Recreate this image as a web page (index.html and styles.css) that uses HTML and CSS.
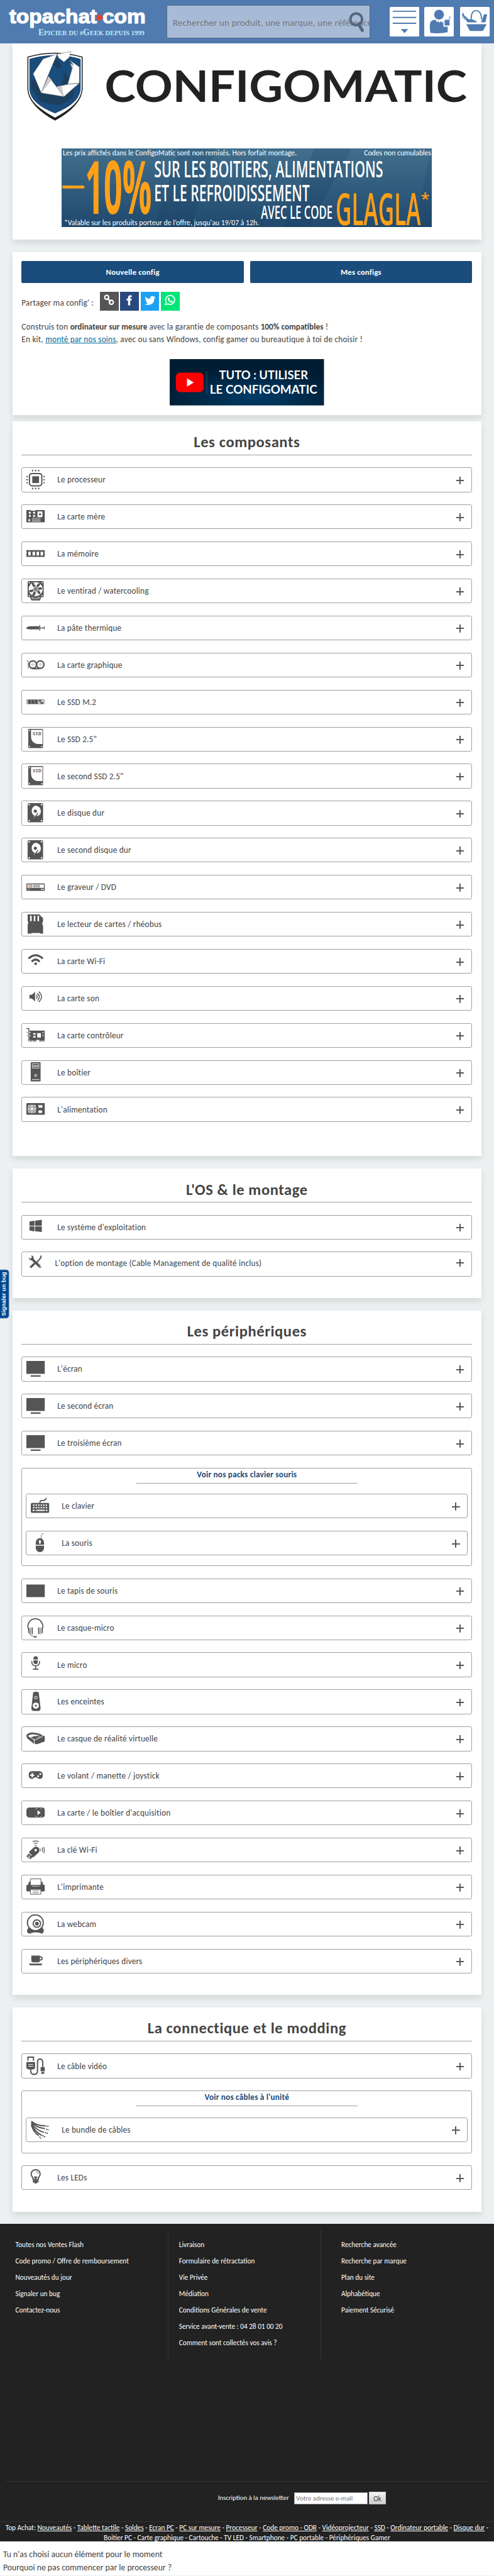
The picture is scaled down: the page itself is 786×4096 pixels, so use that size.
FILE: index.html
```html
<!DOCTYPE html>
<html lang="fr">
<head>
<meta charset="utf-8">
<title>ConfigoMatic - TopAchat</title>
<link rel="stylesheet" href="styles.css">
</head>
<body>
<svg class="sprite" width="0" height="0">
  <symbol id="cpu" viewBox="0 0 30 32"><rect x="5" y="6" width="20" height="20" rx="4" fill="none" stroke="#555" stroke-width="2"/><rect x="9.5" y="10.500" width="11" height="11"/><path d="M10 0v2.500M15 0v2.500M20 0v2.500M10 29v2.500M15 29v2.500M20 29v2.500M0 11h2.500M0 16h2.500M0 21h2.500M27.500 11h2.500M27.500 16h2.500M27.500 21h2.500" stroke="#555" stroke-width="2"/></symbol>
  <symbol id="mobo" viewBox="0 0 30 32"><path d="M0 5h7v1h8v-1h15v20H0z"/><path d="M4 8h3v3h-3zM11 8h3v3h-3zM4 13h3v3h-3zM11 13h3v3h-3zM18 7.500h8v9h-8zM3 20h3v3h-3z" fill="#fff"/><path d="M20.500 10.500h3v3h-3z"/><path d="M9 18.500h14M9 21h14M9 23h14" stroke="#bbb" stroke-width="1.300"/></symbol>
  <symbol id="ram" viewBox="0 0 30 32"><path d="M0 10h30v3l-1 1 1 1v6H10l-1-1-1 1H0v-6l1-1-1-1z"/><path d="M3 12.500h4v6h-4zM10 12.500h4v6h-4zM16.500 12.500h4v6h-4zM23 12.500h4v6h-4z" fill="#fff"/></symbol>
  <symbol id="fan" viewBox="0 0 30 32"><path d="M2 2q0-2 2-2h22q2 0 2 2v23q0 1-2 1H4q-2 0-2-1z"/><circle cx="15" cy="13" r="11.300" fill="#fff"/><g fill="none" stroke="#555" stroke-width="3.600"><path d="M15 9q-5-1-4-6M18 11q-1-5 4-6M19 14q3-4 6-1M16 16q5 0 5 5M13 17q1 4-3 6M11 14q-3 4-6 1"/></g><circle cx="15" cy="13" r="4" fill="#555" stroke="#fff"/><circle cx="15" cy="13" r="1.800" fill="none" stroke="#fff" stroke-width=".7"/><path d="M7 26l2 4h12l2-4" fill="none" stroke="#555" stroke-width="2.400"/><path d="M10 27h10" stroke="#555" stroke-width="2"/><g fill="#fff"><circle cx="4.500" cy="2.500" r="1"/><circle cx="25.500" cy="2.500" r="1"/><circle cx="4.500" cy="23.500" r="1"/><circle cx="25.500" cy="23.500" r="1"/></g></symbol>
  <symbol id="paste" viewBox="0 0 30 32"><path d="M0 15l5-2h16v5H5l-5-1z"/><path d="M21 15h8v1.500h-8zM21 11h1.200v9.500H21zM28.600 13h1.200v5h-1.200z"/></symbol>
  <symbol id="gpu" viewBox="0 0 30 32"><path d="M1 8l2 2v12M6 21h20" fill="none" stroke="#777" stroke-width="1.200"/><g fill="#fff" stroke="#555" stroke-width="2.200"><circle cx="10.500" cy="15" r="6"/><circle cx="22.500" cy="15" r="6"/></g><path d="M10.500 11v8M6.500 15h8M22.500 11v8M18.500 15h8" stroke="#bbb"/><path d="M9 22h12" stroke="#555" stroke-width="1.500"/></symbol>
  <symbol id="m2" viewBox="0 0 30 32"><path d="M.5 11.500h29v7H.5z" fill="#ccc" stroke="#888" stroke-width=".8"/><path d="M2.500 12h5v6.500h-5zM8 12h5v6.500H8zM13.500 12h5v6.500h-5zM20 12h4v3h-4zM23 15.500h4v3h-4z"/></symbol>
  <symbol id="ssd" viewBox="0 0 30 32"><path d="M3 1q0-1 1-1h22q1 0 1 1v29q0 1-1 1H4q-1 0-1-1z"/><path d="M7.500 1.500H26v23h-8Q8 23 7.500 13z" fill="#fff"/><text x="10.300" y="10" class="tiny" textLength="14">SSD</text><g fill="#fff"><circle cx="5" cy="2.500" r="1"/><circle cx="5" cy="28.500" r="1"/><circle cx="25" cy="28.500" r="1"/></g></symbol>
  <symbol id="hdd" viewBox="0 0 30 32"><path d="M2 2q0-2 2-2h21q2 0 2 2v27q0 2-2 2H4q-2 0-2-2z"/><path d="M14.500 4a9 9 0 0 1 9 9q0 7-7 8.500l3-5-9 10 3-6a9 9 0 0 1 1-16.500" fill="#fff"/><path d="M19 16l-9 11" stroke="#555" stroke-width="1.200"/><circle cx="14.500" cy="13" r="2.600"/><g fill="#fff"><circle cx="4.500" cy="2.500" r="1.200"/><circle cx="24.500" cy="2.500" r="1.200"/><circle cx="4.500" cy="28.500" r="1.200"/><circle cx="24.500" cy="28.500" r="1.200"/></g></symbol>
  <symbol id="dvd" viewBox="0 0 30 32"><rect y="10" width="30" height="12" rx="1"/><path d="M1.500 11.500h27v5.500h-27zM23.500 18.800h5v1.200h-5zM2 18.800h1v1.200H2zM4.500 18.800h1v1.200h-1z" fill="#fff"/><text x="3" y="16" class="tiny dvd" textLength="19" lengthAdjust="spacingAndGlyphs">CD-DVD</text></symbol>
  <symbol id="sd" viewBox="0 0 30 32"><path d="M2 0h19l6 6v6l-1 1v4l1 1v13h-5v-1H8v1H2V18l1-6-1-1z"/><path d="M6 2h2.500v9H6zM12 2h2.500v9H12zM18 2h2.500v9H18z" fill="#fff"/></symbol>
  <symbol id="wifi" viewBox="0 0 30 32"><path d="M4.500 10.500q10.500-9 21 0M9.500 15.500q5.500-5 11 0" fill="none" stroke="#555" stroke-width="3.200" stroke-linecap="round"/><circle cx="15" cy="19.800" r="2.200"/></symbol>
  <symbol id="sound" viewBox="0 0 30 32"><path d="M5 10h4l5-5v16l-5-5H5z"/><path d="M16 10q3 3 0 6.500M18 7.500q6 5.500 0 11.500M20 5q9 8 0 16.500" fill="none" stroke="#555" stroke-width="1.500"/></symbol>
  <symbol id="ctrl" viewBox="0 0 30 32"><path d="M0 4.500h4v21" fill="none" stroke="#555" stroke-width="1.500"/><path d="M5 8h25v15h-1v3h-1.500v-2H26v2h-1v-2h-1v2h-1v-2h-1v2h-1v-3h-5v3h-1v-2h-1v2h-1v-2h-1v2h-1v-2H9v2H8v-2H7v2H6v-3H5z"/><path d="M11 12h4v2.500h-4zM11 16.500h4V19h-4zM17.500 12h6v7h-6zM26 10.500h2V12h-2zM26 15h2v1.500h-2zM5 10h1.500v2H5zM5 15h1.500v2H5z" fill="#fff"/><path d="M1 10h1v2H1zM1 15h1v2H1z"/></symbol>
  <symbol id="case" viewBox="0 0 30 32"><rect x="7" width="16" height="31" rx="1"/><path d="M9.500 2.500h11v3h-11zM9.500 7h11v2.500h-11z" fill="none" stroke="#ddd"/><circle cx="15" cy="21.500" r="1.700" fill="none" stroke="#fff"/><path d="M9 28h12" stroke="#ccc" stroke-width="1.500"/></symbol>
  <symbol id="psu" viewBox="0 0 30 32"><rect y="6" width="30" height="19" rx="1"/><g fill="none" stroke="#fff"><rect x="3" y="9.500" width="12" height="12" rx="3"/><circle cx="9" cy="15.500" r="4.500"/><circle cx="9" cy="15.500" r="2"/><path d="M3 9.500l12 12M15 9.500l-12 12M9 9.500v12M3 15.500h12"/><rect x="20" y="18.500" width="5" height="3" fill="#fff"/></g><path d="M19.500 9.500h6.500v4h-6.500z" fill="#fff"/></symbol>
  <symbol id="win" viewBox="0 0 30 32"><path d="M5 7.500l8-1.300v8H5zM14 6l11-1.500v9.700H14zM5 15.300h8v8l-8-1.300zM14 15.300h11v9.200l-11-1.400z"/></symbol>
  <symbol id="tools" viewBox="0 0 30 32"><path d="M9 9l13 12.500" stroke="#555" stroke-width="4" stroke-linecap="round"/><path d="M8 3l1 4-3 2-2-3q0 4 3 5h4l1-3q0-4-4-5zM23 3l2 1-1 4-7 8-2-1 7-8zM12 15l3 2-6 6q-2 1-4-1z"/><circle cx="22.300" cy="21" r="1" fill="#fff"/></symbol>
  <symbol id="screen" viewBox="0 0 30 32"><path d="M0 3h30v21H0zM7 26.300h16v2.200H7z"/></symbol>
  <symbol id="kbd" viewBox="0 0 30 32"><path d="M15 11q-1-4 4-4t6-4" fill="none" stroke="#555" stroke-width="2"/><rect y="11" width="30" height="16" rx="2"/><path d="M3.500 14.500h23M3.500 18.500h23" stroke="#fff" stroke-width="2" stroke-dasharray="2.500 1.600"/><path d="M3 23h3.500M8.500 23h14M24 23h3" stroke="#fff" stroke-width="2"/></symbol>
  <symbol id="mouse" viewBox="0 0 30 32"><path d="M21 .5q-5 0-4 4t-2 4" fill="none" stroke="#777"/><path d="M8 17q0-8.500 6.700-9 6.800.5 6.800 9v1.500H8zM8 20h13.500v4q-1 6.500-6.800 6.500T8 24z"/><rect x="13.200" y="11" width="3" height="6" rx="1.500" fill="#fff"/></symbol>
  <symbol id="pad" viewBox="0 0 30 32"><path d="M0 5.500h30v20.500H0z"/></symbol>
  <symbol id="headset" viewBox="0 0 30 32"><path d="M4 19Q1 14 3.500 8 7.500 1 14.500 1T25.500 8q2.500 6-.5 11" fill="none" stroke="#555" stroke-width="1.800"/><path d="M3 16l2 .5v9l-2-2zM6 15h1v11H6zM8.500 15h1.800v11H8.500zM19 15h1.800v11H19zM22 15h1v11h-1zM24.500 16l2-.5v8l-2 2z"/><path d="M5.500 25q1 4 9 5.500" fill="none" stroke="#555"/><ellipse cx="14.500" cy="30" rx="2.300" ry="1.300"/></symbol>
  <symbol id="mic" viewBox="0 0 30 32"><path d="M11.500 5.500q0-3 3.500-3t3.500 3v2.500h-7zM11.500 9.200h7v3q0 3-3.500 3t-3.500-3z"/><path d="M8.800 10.500V13q.5 5 6.200 5t6.200-5v-2.500M15 18v5.500M10.500 23.500h9" fill="none" stroke="#555" stroke-width="1.700"/></symbol>
  <symbol id="speaker" viewBox="0 0 30 32"><path d="M11 1q4-2 9 0l3 26q0 3-3 4h-9q-3-1-3-4z"/><circle cx="15.300" cy="22.500" r="5" fill="#fff"/><circle cx="15.300" cy="22.500" r="1.700"/><circle cx="15.300" cy="9.500" r="2.200" fill="none" stroke="#fff"/></symbol>
  <symbol id="vr" viewBox="0 0 30 32"><path d="M1 12q2-5 10-4.500 9 .5 14 4" fill="none" stroke="#555" stroke-width="3"/><path d="M0 10l12 8 1 7L1 15zM13 17l14-6q3 0 3 3v5q0 2-3 2.500L17 25q-3 0-4-2z"/><path d="M12 12l12-1-11 6-6-3z"/><path d="M12.500 25v-6l14-6.500" fill="none" stroke="#fff" stroke-width=".8"/></symbol>
  <symbol id="gamepad" viewBox="0 0 30 32"><path d="M9 8.500h12q5.500.5 5.500 6.500t-5 6q-3 0-4.500-2.500h-4Q11.500 21 9 21q-5 0-5.300-6T9 8.500"/><path d="M9.500 11.500v7M6 15h7" stroke="#fff" stroke-width="2.200"/><circle cx="19" cy="16.500" r="1.600" fill="#fff"/><circle cx="22.500" cy="13" r="1.600" fill="#fff"/></symbol>
  <symbol id="capture" viewBox="0 0 30 32"><rect y="7" width="30" height="16.500" rx="5"/><path d="M18 11.500l5 4-5 4z" fill="#fff"/><path d="M14 10q2-1.500 4-1M22 9q2 0 3 1M14 21q2 1 4 1M22 22q2 0 3-1" fill="none" stroke="#bbb"/></symbol>
  <symbol id="usb" viewBox="0 0 30 32"><path d="M4 19L13 11q5-2 8 3 1 4-2 7l-8 7z"/><path d="M4 21.500L0 26l6 5 4.500-4z"/><path d="M3 25l2 1.500M6 23l2 1.500M4 27l2 2" stroke="#fff" stroke-width="1.200"/><circle cx="15" cy="16" r="2" fill="#fff"/><path d="M10 2.500q5-2.500 10 0M12 5.500q3-1.500 6 0M13.500 8.500h3M23 14v3M25.500 12q1.500 3.500 0 7M28 11q2.500 5 0 10" fill="none" stroke="#666" stroke-width="1.400"/></symbol>
  <symbol id="printer" viewBox="0 0 30 32"><path d="M0 14q0-2 2-2h26q2 0 2 2v8q0 1-2 1H2q-2 0-2-1zM3 12l1-5h2v5zM27 12l-1-5h-2v5z"/><path d="M6.500 2.500h17v10.500h-17zM6.500 19.500h17v8h-17z" fill="#fff" stroke="#555"/><path d="M10 22h10M10 25h10" stroke="#777"/><path d="M9 14.500h12" stroke="#ccc"/></symbol>
  <symbol id="webcam" viewBox="0 0 30 32"><path d="M4 21h21q4 3 3 7-1 3-3 3-5-2-10-2t-9 2q-4 0-5-3 0-4 3-7"/><circle cx="14.500" cy="13.500" r="12.800" fill="#fff" stroke="#555" stroke-width="2"/><circle cx="17" cy="15" r="6" fill="#fff" stroke="#555" stroke-width="2"/><circle cx="17" cy="15" r="3"/></symbol>
  <symbol id="cup" viewBox="0 0 30 32"><path d="M8 6.500h14v8q0 3-3 3h-8q-3 0-3-3zM4 19.500h22q-1 3-4 3H8q-3 0-4-3"/><path d="M22 8.500q3.500 0 3.500 2.700T22 14" fill="none" stroke="#555" stroke-width="1.800"/></symbol>
  <symbol id="cable" viewBox="0 0 30 32"><path d="M2.500 8V2h9v6" fill="none" stroke="#555" stroke-width="2"/><path d="M0 10h14v10l-2.500 2H3l-3-2zM23 18h7v7h-7zM24 26h5v3h-5z"/><path d="M7 21v3q0 6 5.500 6t5.500-6V10q0-5 4-5t4.500 5v8" fill="none" stroke="#555" stroke-width="2"/><path d="M3 14h8M3 17h8" stroke="#fff"/></symbol>
  <symbol id="bundle" viewBox="0 0 30 32"><g fill="none" stroke="#555" stroke-width="2"><path d="M1 2q7 7 23 7.500M1 2q6 10 22 12M1 4q6 12 20 16M1 6q5 13 17 19M1 8q4 13 12 17"/><path d="M25 10h4M25 15l4 1M23 20l5 2M19 25l5 3M14 27l3 3" stroke-dasharray="2 1"/></g></symbol>
  <symbol id="bulb" viewBox="0 0 30 32"><path d="M11 19q0-3-2-5-2-3-1-6 2-5 7-5t7 5q1 3-1 6-2 2-2 5z" fill="#fff" stroke="#555" stroke-width="2"/><path d="M15 6q4 0 4 4" fill="none" stroke="#777"/><path d="M12 14l3 6 3-6M10.500 20h9v4h-3v1.500h-3V24h-3z"/></symbol>
</svg>

<header class="top">
  <svg class="brand" viewBox="0 0 240 70">
    <text class="brand-name" x="15" y="37.500" textLength="142" lengthAdjust="spacingAndGlyphs">topachat</text>
    <text class="brand-name" x="166" y="37.500" textLength="70" lengthAdjust="spacingAndGlyphs">com</text>
    <path d="M161.500 22l6 6.500-6 6.500-6-6.500z" fill="#e8432c"/>
    <text class="brand-tag" x="62" y="57" textLength="172" lengthAdjust="spacingAndGlyphs"><tspan class="cap">E</tspan>PICIER DU #<tspan class="cap">G</tspan>EEK DEPUIS 1999</text>
  </svg>
  <div class="search">
    <span class="search-text">Rechercher un produit, une marque, une référence</span>
    <svg class="glass" viewBox="0 0 26 34"><circle cx="12" cy="12" r="9.500" fill="none" stroke="#55677e" stroke-width="4"/><path d="M16 20l6 10" stroke="#55677e" stroke-width="5" stroke-linecap="round"/></svg>
  </div>
  <nav class="tools">
    <svg class="tool" viewBox="0 0 48 48"><rect width="48" height="48" rx="2" fill="#fff"/><path d="M5 7h38M5 17h38M5 26.500h38" stroke="#4f7bb0" stroke-width="2"/><path d="M18 36h12l-6 6.500z" fill="#4f7bb0"/></svg>
    <svg class="tool" viewBox="0 0 48 48"><rect width="48" height="48" rx="2" fill="#fff"/><g fill="#4f7bb0"><circle cx="24" cy="12.500" r="8"/><path d="M10 42q-2-12 0-17 2-4 9-4l1 4 3-2 2 3 2-3 3 3 1-4v10h7v9q-14 3-28 1z"/><path d="M33 21h7l1-5 2-1-2 5v10h-8z"/></g></svg>
    <svg class="tool basket" viewBox="0 0 48 48"><rect width="48" height="48" rx="2" fill="#fff"/><g fill="#4f7bb0"><path d="M10 28h33l-6 11H16zM3 12l3-3v4l8 7q8-1 14 5H12L6 16l-2-1zM39 12h5l-3 13h-7z"/></g><path d="M18 20q0-14 8-14t9 14" fill="none" stroke="#4f7bb0" stroke-width="2"/><path d="M5 15l-1 4M7 16v5" stroke="#4f7bb0"/></svg>
  </nav>
</header>

<main>
  <section class="card hero">
    <svg class="logo" viewBox="0 0 730 120">
      <path d="M10.500 10q44-13 88 0v52q-2 26-44 50Q12 88 10.500 62z" fill="#fff" stroke="#222" stroke-width="1.500"/>
      <path d="M11 68q6 24 43.500 44.500Q92 92 98 68q-6 20-43.500 40Q17 88 11 68z" fill="#222"/>
      <path d="M13 13q41.500-12 83 0v50q-3 23-41.500 38Q15 86 13 63z" fill="#1a4c7c"/>
      <path d="M15 50l3 12 12 20 33 6 20-12 3-18-20-30-16-8-15 18z" fill="#1d3f5e"/>
      <path d="M42 40l8-20 12-4 10 10-6 28-14 10z" fill="#1a4c7c"/>
      <path d="M47 15l12-2 6 11-5 5-9-7z" fill="#1d3f5e"/>
      <g fill="#fff" stroke="#444" stroke-width=".5"><path d="M58 5L35 13 19 37l13 31 14-35zM58 5l22-4-2 9-9 8-9-7zM77 14l17 12v26l-19 2 9-32zM75 54l19-2-25 22-12-16zM44 41l25 33-37-6z"/></g>
      <path d="M44 41l-12 27 17-21zM57 58l12 16-4-18zM84 22l-1 8-4-10z" fill="#ccc"/>
      <text class="wordmark" x="135" y="82.500" textLength="587" lengthAdjust="spacingAndGlyphs">CONFIGOMATIC</text>
    </svg>
    <svg class="promo" viewBox="0 0 600 128">
      <defs><linearGradient id="sea" x1="0" y1="0" x2="0" y2="1"><stop offset="0" stop-color="#426f8d"/><stop offset="1" stop-color="#20496d"/></linearGradient></defs>
      <rect width="600" height="128" fill="url(#sea)"/>
      <path d="M190 0h60l-40 128h-60zM410 0h60l-70 128h-40zM600 0v128h-30z" fill="#123a60" opacity=".18"/>
      <text class="fine" x="2" y="11" textLength="379">Les prix affichés dans le ConfigoMatic sont non remisés. Hors forfait montage.</text>
      <text class="fine" x="490" y="11" textLength="109">Codes non cumulables</text>
      <rect x="1" y="60" width="36" height="5" rx="2" fill="#ffa019"/>
      <text class="hand ten" transform="translate(38 106)" textLength="108" lengthAdjust="spacingAndGlyphs">10%</text>
      <text class="hand" x="150" y="47" textLength="371" lengthAdjust="spacingAndGlyphs">SUR LES BOITIERS, ALIMENTATIONS</text>
      <text class="hand" x="150" y="86" textLength="252" lengthAdjust="spacingAndGlyphs">ET LE REFROIDISSEMENT</text>
      <text class="hand code" x="323" y="114" textLength="116" lengthAdjust="spacingAndGlyphs">AVEC LE CODE</text>
      <text class="hand glagla" x="444" y="124.500" textLength="138" lengthAdjust="spacingAndGlyphs">GLAGLA</text>
      <text class="hand star" x="582" y="91">*</text>
      <text class="fine" x="4" y="124" textLength="316">*Valable sur les produits porteur de l’offre, jusqu'au 19/07 à 12h.</text>
    </svg>
  </section>

  <section class="card intro">
    <div class="buttons"><a class="btn">Nouvelle config</a><a class="btn">Mes configs</a></div>
    <div class="share"><span>Partager ma config' :</span>
      <svg class="sh link" viewBox="0 0 30 30"><g fill="none" stroke="#fff" stroke-width="2.200"><circle cx="11" cy="9" r="3.300"/><circle cx="18.500" cy="17" r="3.300"/><path d="M12 10.500l5.500 5.500"/></g></svg>
      <svg class="sh fb" viewBox="0 0 30 30"><path d="M13 22v-8h-2.500v-3H13V9q0-3.500 3.500-3.500H19v3h-1.500Q16.500 8.500 16.500 10v1H19l-.5 3h-2v8z" fill="#fff"/></svg>
      <svg class="sh tw" viewBox="0 0 30 30"><path d="M7 7.500q3.500 4 8 4 0-4.500 3.500-4.500 2 0 3 1l2-.7-1.500 2 1.800-.3-1.800 1.800Q22 21 12 21.500q-3.500 0-5.500-1.500 3 0 5-1.500-2.500-.5-3-2.500H10q-2.500-1-2.700-3.500l1.300.3Q6.500 10.500 7 7.500" fill="#fff"/></svg>
      <svg class="sh wa" viewBox="0 0 30 30"><path d="M7.500 20.500l1-4a7.300 7.300 0 1 1 3 3z" fill="none" stroke="#fff" stroke-width="1.700"/><path d="M12 9.500l1.500 0 .8 2-.8 1q1 2 3 2.800l1-1 2 1q0 2-2 2.200-6-1-6.500-6 0-1.500 1-2" fill="#fff"/></svg>
    </div>
    <p class="lead">Construis ton <b>ordinateur sur mesure</b> avec la garantie de composants <b>100% compatibles</b> !<br>En kit, <a class="lnk">monté par nos soins</a>, avec ou sans Windows, config gamer ou bureautique à toi de choisir !</p>
    <svg class="tuto" viewBox="0 0 250 75">
      <defs><radialGradient id="deep" cx=".55" cy=".8" r=".6"><stop offset="0" stop-color="#003c68"/><stop offset="1" stop-color="#001d33"/></radialGradient></defs>
      <rect width="250" height="75" fill="url(#deep)"/>
      <rect x="10" y="22" width="45" height="31.500" rx="7" fill="#f00"/><path d="M28 31l11 7-11 6.500z" fill="#fff"/><path d="M60 20v36" stroke="#3b5468"/>
      <text class="tuto-text" x="80" y="33" textLength="144" lengthAdjust="spacingAndGlyphs">TUTO : UTILISER</text>
      <text class="tuto-text" x="65" y="56.500" textLength="174" lengthAdjust="spacingAndGlyphs">LE CONFIGOMATIC</text>
    </svg>
  </section>

  <section class="card parts">
    <h2>Les composants</h2>
    <div class="list">
      <div class="row"><svg><use href="#cpu"/></svg><span>Le processeur</span><i></i></div>
      <div class="row"><svg><use href="#mobo"/></svg><span>La carte mère</span><i></i></div>
      <div class="row"><svg><use href="#ram"/></svg><span>La mémoire</span><i></i></div>
      <div class="row"><svg><use href="#fan"/></svg><span>Le ventirad / watercooling</span><i></i></div>
      <div class="row"><svg><use href="#paste"/></svg><span>La pâte thermique</span><i></i></div>
      <div class="row"><svg><use href="#gpu"/></svg><span>La carte graphique</span><i></i></div>
      <div class="row"><svg><use href="#m2"/></svg><span>Le SSD M.2</span><i></i></div>
      <div class="row"><svg><use href="#ssd"/></svg><span>Le SSD 2.5"</span><i></i></div>
      <div class="row"><svg><use href="#ssd"/></svg><span>Le second SSD 2.5"</span><i></i></div>
      <div class="row"><svg><use href="#hdd"/></svg><span>Le disque dur</span><i></i></div>
      <div class="row"><svg><use href="#hdd"/></svg><span>Le second disque dur</span><i></i></div>
      <div class="row"><svg><use href="#dvd"/></svg><span>Le graveur / DVD</span><i></i></div>
      <div class="row"><svg><use href="#sd"/></svg><span>Le lecteur de cartes / rhéobus</span><i></i></div>
      <div class="row"><svg><use href="#wifi"/></svg><span>La carte Wi-Fi</span><i></i></div>
      <div class="row"><svg><use href="#sound"/></svg><span>La carte son</span><i></i></div>
      <div class="row"><svg><use href="#ctrl"/></svg><span>La carte contrôleur</span><i></i></div>
      <div class="row"><svg><use href="#case"/></svg><span>Le boîtier</span><i></i></div>
      <div class="row"><svg><use href="#psu"/></svg><span>L'alimentation</span><i></i></div>
    </div>
  </section>

  <section class="card spaced">
    <h2>L'OS &amp; le montage</h2>
    <div class="list">
      <div class="row"><svg><use href="#win"/></svg><span>Le système d'exploitation</span><i></i></div>
      <div class="row option"><svg><use href="#tools"/></svg><span>L'option de montage (Cable Management de qualité inclus)</span><i></i></div>
    </div>
  </section>

  <section class="card spaced">
    <h2>Les périphériques</h2>
    <div class="list">
      <div class="row"><svg><use href="#screen"/></svg><span>L'écran</span><i></i></div>
      <div class="row"><svg><use href="#screen"/></svg><span>Le second écran</span><i></i></div>
      <div class="row"><svg><use href="#screen"/></svg><span>Le troisième écran</span><i></i></div>
      <div class="pack">
        <a class="pack-title">Voir nos packs clavier souris</a>
        <div class="row"><svg><use href="#kbd"/></svg><span>Le clavier</span><i></i></div>
        <div class="row"><svg><use href="#mouse"/></svg><span>La souris</span><i></i></div>
      </div>
      <div class="row"><svg><use href="#pad"/></svg><span>Le tapis de souris</span><i></i></div>
      <div class="row"><svg><use href="#headset"/></svg><span>Le casque-micro</span><i></i></div>
      <div class="row"><svg><use href="#mic"/></svg><span>Le micro</span><i></i></div>
      <div class="row"><svg><use href="#speaker"/></svg><span>Les enceintes</span><i></i></div>
      <div class="row"><svg><use href="#vr"/></svg><span>Le casque de réalité virtuelle</span><i></i></div>
      <div class="row"><svg><use href="#gamepad"/></svg><span>Le volant / manette / joystick</span><i></i></div>
      <div class="row"><svg><use href="#capture"/></svg><span>La carte / le boîtier d'acquisition</span><i></i></div>
      <div class="row"><svg><use href="#usb"/></svg><span>La clé Wi-Fi</span><i></i></div>
      <div class="row"><svg><use href="#printer"/></svg><span>L'imprimante</span><i></i></div>
      <div class="row"><svg><use href="#webcam"/></svg><span>La webcam</span><i></i></div>
      <div class="row"><svg><use href="#cup"/></svg><span>Les périphériques divers</span><i></i></div>
    </div>
  </section>

  <section class="card spaced last">
    <h2>La connectique et le modding</h2>
    <div class="list">
      <div class="row"><svg><use href="#cable"/></svg><span>Le câble vidéo</span><i></i></div>
      <div class="pack single">
        <a class="pack-title">Voir nos câbles à l'unité</a>
        <div class="row"><svg><use href="#bundle"/></svg><span>Le bundle de câbles</span><i></i></div>
      </div>
      <div class="row"><svg><use href="#bulb"/></svg><span>Les LEDs</span><i></i></div>
    </div>
  </section>
</main>

<a class="bug">Signaler un bug</a>

<footer class="foot">
  <div class="cols">
    <ul><li>Toutes nos Ventes Flash</li><li>Code promo / Offre de remboursement</li><li>Nouveautés du jour</li><li>Signaler un bug</li><li>Contactez-nous</li></ul>
    <ul><li>Livraison</li><li>Formulaire de rétractation</li><li>Vie Privée</li><li>Médiation</li><li>Conditions Générales de vente</li><li>Service avant-vente : 04 28 01 00 20</li><li>Comment sont collectés vos avis ?</li></ul>
    <ul><li>Recherche avancée</li><li>Recherche par marque</li><li>Plan du site</li><li>Alphabétique</li><li>Paiement Sécurisé</li></ul>
  </div>
  <div class="news"><span>Inscription à la newsletter</span><span class="mail">Votre adresse e-mail</span><span class="ok">Ok</span></div>
  <div class="seo">
    <div class="seo-a">Top Achat: <u>Nouveautés</u> - <u>Tablette tactile</u> - <u>Soldes</u> - <u>Ecran PC</u> - <u>PC sur mesure</u> - <u>Processeur</u> - <u>Code promo - ODR</u> - <u>Vidéoprojecteur</u> - <u>SSD</u> - <u>Ordinateur portable</u> - <u>Disque dur</u> -</div>
    <div class="seo-b">Boitier PC - Carte graphique - Cartouche - TV LED - Smartphone - PC portable - Périphériques Gamer</div>
  </div>
</footer>
<div class="summary">Tu n'as choisi aucun élément pour le moment<br>Pourquoi ne pas commencer par le processeur ?</div>
</body>
</html>
```

FILE: styles.css
```css
* { box-sizing: border-box; }
html { background: #fff; overflow: hidden; }
body {
  margin: 0;
  width: 800.4px;
  height: 4171px;
  overflow: hidden;
  position: relative;
  zoom: 0.982;
  background: #ecf0f1;
  color: #444;
  font-family: Carlito, Lato, "Open Sans", sans-serif;
  font-size: 13.5px;
  letter-spacing: .2px;
}
.sprite { display: block; position: absolute; }
svg { display: block; letter-spacing: 0; }
.tiny { font: bold 7px "Open Sans", sans-serif; fill: #555; }
.tiny.dvd { font-size: 5px; }

.top { height: 70px; background: #4f7bb0; display: flex; align-items: flex-start; }
.brand { width: 240px; height: 70px; }
.brand-name { font: bold 31px "Liberation Sans", sans-serif; fill: #fff; stroke: #fff; stroke-width: 1.2; }
.brand-tag { font: bold 11px "Liberation Serif", serif; fill: #bfe6f7; white-space: pre; }
.brand-tag .cap { font-size: 14px; }
.search { margin: 8px 0 0 30px; width: 330px; height: 54px; border: 1px solid #57677c; background: #a7bbd7; position: relative; overflow: hidden; display: flex; align-items: center; padding: 3px 0 0 9px; }
.search-text { white-space: nowrap; font-size: 15.2px; color: #757575; }
.glass { position: absolute; left: 294px; top: 10px; width: 26px; height: 34px; }
.tools { display: flex; margin: 11px 0 0 31px; gap: 8px; }
.tool { width: 48px; height: 48px; }
.basket { margin-left: 3px; }

.card { width: 760px; margin: 0 auto; background: #fff; padding: 0 15px; box-shadow: 0 5px 10px rgba(0,0,0,.1); }
main { padding: 0 .4px 0 0; }
.hero { height: 318px; padding-top: 12px; }
.logo { width: 730px; height: 120px; }
.wordmark, .tuto-text { font-family: Lato, sans-serif; font-weight: bold; }
.wordmark { font-size: 70px; fill: #222; }
.promo { width: 600px; height: 128px; margin: 38px auto 0; }
.fine { font-size: 12px; fill: #fff; }
.hand { font-family: "Open Sans", sans-serif; font-weight: 600; font-size: 37.5px; fill: #fff; }
.hand.code { font-size: 30px; }
.hand.ten { font-size: 118px; fill: #ffa019; font-weight: 700; }
.hand.glagla { font-size: 71px; fill: #ffa019; }
.hand.star { font-size: 26px; fill: #ffa019; }

.intro { margin-top: 20px; height: 264px; padding-top: 15px; }
.buttons { display: flex; gap: 10px; }
.btn { flex: 1; height: 35px; background: #1a4c7c; border-radius: 2px; color: #fff; font-size: 13px; font-weight: bold; display: flex; align-items: center; justify-content: center; }
.share { display: flex; height: 30px; margin-top: 15px; align-items: center; gap: 3px; }
.share span { width: 124px; padding-top: 5px; white-space: nowrap; }
.sh { width: 30px; height: 30px; }
.link { background: #555; }
.fb { background: #29487d; }
.tw { background: #1da1f2; }
.wa { background: #00e676; }
.lead { margin: 16px 0 0; line-height: 21px; white-space: nowrap; }
.lead b { letter-spacing: 0; }
.lnk { color: #006c9a; text-decoration: underline; }
.tuto { width: 250px; height: 75px; margin: 21px auto 0; }
.tuto-text { font-size: 20px; fill: #fff; }

.parts { margin-top: 10px; height: 1190px; }
.spaced { margin-top: 20px; padding-bottom: 35px; }
h2 { margin: 0; height: 55px; padding-top: 20px; border-bottom: 1px solid #a0a0a0; text-align: center; font-size: 25px; letter-spacing: .6px; line-height: 29px; font-weight: bold; }
.list { padding-top: 20px; display: flex; flex-direction: column; gap: 20px; }
.row { height: 40px; border: 1px solid #a0a0a0; border-radius: 3px; display: flex; align-items: center; padding: 0 12px 0 7px; }
.row svg { width: 30px; height: 32px; fill: #555; }
.row span { margin-left: 20px; flex: 1; white-space: nowrap; }
.row i { width: 13px; height: 13px; margin-top: 2px; background: linear-gradient(#555,#555) center/13px 2px no-repeat, linear-gradient(#555,#555) center/2px 13px no-repeat; }
.option svg { margin-top: -2px; }
.option span { margin: -4px 0 0 16px; }
.option i { margin-top: -4px; }
.pack { height: 159px; border: 1px solid #a0a0a0; border-radius: 3px; padding: 0 6px; display: flex; flex-direction: column; }
.pack .row { margin-bottom: 20px; flex: none; }
.pack-title { align-self: center; width: 358px; height: 24px; line-height: 20px; text-align: center; color: #1a4c7c; font-weight: bold; border-bottom: 1px solid #a0a0a0; margin-bottom: 17px; flex: none; }
.single { height: 101px; }
.single .pack-title { margin-bottom: 18px; }

.bug { position: absolute; left: -2px; top: 2056px; width: 17px; height: 79px; background: #00468c; border: 1px solid #6d9bc8; border-radius: 5px 0 0 5px; color: #fff; font: bold 9.5px "Liberation Sans", sans-serif; letter-spacing: 0; writing-mode: vertical-rl; transform: rotate(180deg); display: flex; align-items: center; justify-content: center; white-space: nowrap; }

.foot { margin-top: 20px; height: 514px; background: #222; color: #fff; font-size: 11.5px; letter-spacing: 0; overflow: hidden; }
.cols { display: flex; padding-top: 9px; height: 417px; border-bottom: 1px solid #333; margin: 0 9px 0 8px; }
.cols ul { list-style: none; margin: 0; height: 210px; padding: 10.5px 0 0 17px; line-height: 26.5px; white-space: nowrap; }
.cols ul:nth-child(1) { width: 265px; border-right: 1px solid #333; }
.cols ul:nth-child(2) { width: 247px; border-right: 1px solid #333; }
.cols ul:nth-child(3) { padding-left: 33px; }
.news { display: flex; height: 64px; padding: 16px 0 0 353px; align-items: flex-start; white-space: nowrap; }
.news span:first-child { width: 124px; line-height: 20px; font-size: 11px; }
.mail { width: 119px; height: 20px; margin-top: 1px; background: #fff; border: 1px solid #aaa; color: #757575; font-size: 11px; line-height: 19px; padding-left: 2px; }
.ok { margin-left: 2px; width: 27px; height: 21px; background: linear-gradient(#f4f4f4, #ccc); border: 1px solid #ccc; color: #444; line-height: 21px; text-align: center; }
.seo { border-top: 2px solid #333; white-space: nowrap; text-align: center; line-height: 17px; padding-top: 1px; }
.summary { height: 55px; background: #fff; padding: 11px 5px 0; line-height: 21px; font-size: 14px; letter-spacing: 0; white-space: nowrap; }
```
